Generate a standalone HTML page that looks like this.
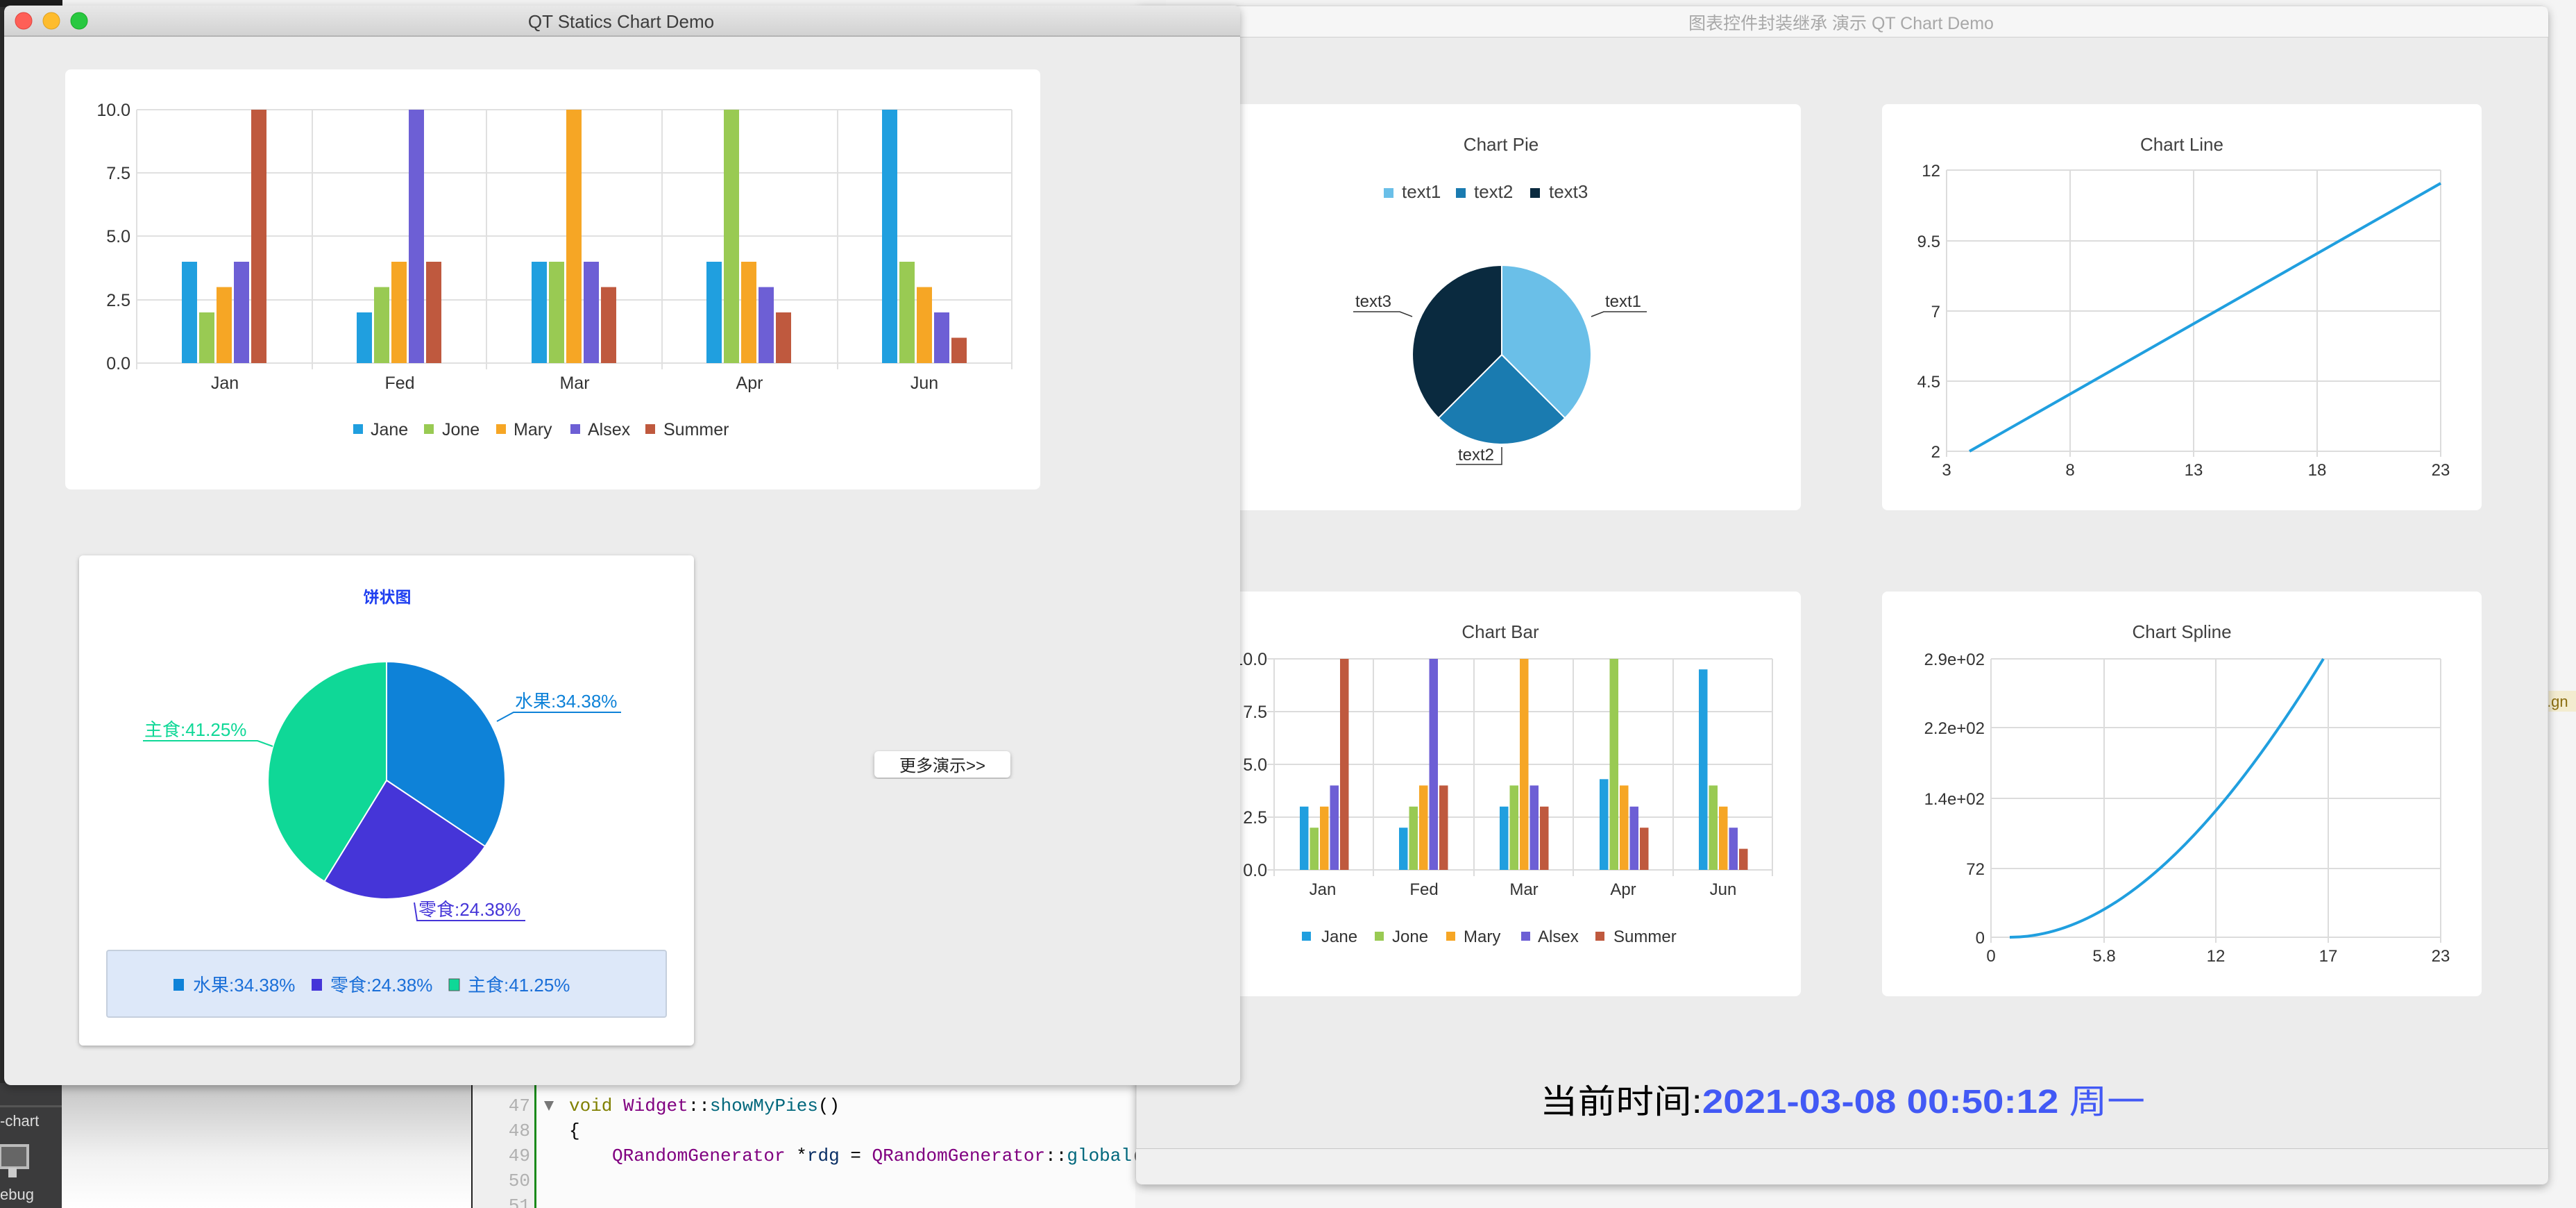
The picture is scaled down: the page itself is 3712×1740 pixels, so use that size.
<!DOCTYPE html>
<html><head><meta charset="utf-8"><style>
html,body{margin:0;padding:0;width:3712px;height:1740px;overflow:hidden;background:#f4f4f4}
svg{display:block}
text{font-family:"Liberation Sans","Noto Sans CJK SC",sans-serif}
.mono text{font-family:"Liberation Mono","Noto Sans CJK SC",monospace}
</style></head><body>
<svg width="3712" height="1740" viewBox="0 0 3712 1740" xmlns="http://www.w3.org/2000/svg">
<defs>
<linearGradient id="tb" x1="0" y1="0" x2="0" y2="1"><stop offset="0" stop-color="#e8e8e8"/><stop offset="1" stop-color="#d2d2d2"/></linearGradient>
<linearGradient id="ed" x1="0" y1="0" x2="0" y2="1"><stop offset="0" stop-color="#c4c4c4"/><stop offset="0.6" stop-color="#f2f2f2"/><stop offset="1" stop-color="#ffffff"/></linearGradient>
<filter id="sh" x="-5%" y="-5%" width="110%" height="115%"><feDropShadow dx="0" dy="4" stdDeviation="6" flood-color="#000" flood-opacity="0.3"/></filter>
<filter id="sh2" x="-5%" y="-5%" width="110%" height="110%"><feDropShadow dx="0" dy="2" stdDeviation="3" flood-color="#000" flood-opacity="0.3"/></filter>
</defs>
<rect x="0" y="0" width="3712" height="1740" fill="#f4f4f4"/>
<rect x="0" y="0" width="40" height="1740" fill="#2c2c2c"/>
<rect x="90" y="0" width="1590" height="10" fill="#f2f2f2"/>
<rect x="0" y="0" width="90" height="10" fill="#1c1c1c"/>
<rect x="0" y="1560" width="89" height="180" fill="#3b3b3c"/>
<rect x="0" y="1592" width="89" height="3" fill="#555"/>
<text x="0" y="1622" font-size="22" fill="#ddd">-chart</text>
<rect x="0" y="1650" width="40" height="32" fill="#666" stroke="#bbb" stroke-width="4"/>
<rect x="12" y="1682" width="12" height="14" fill="#ccc"/>
<text x="0" y="1728" font-size="22" fill="#ddd">ebug</text>
<rect x="89" y="1560" width="591" height="180" fill="url(#ed)"/>
<rect x="680" y="1560" width="92" height="180" fill="#efefef"/>
<rect x="679" y="1560" width="2" height="180" fill="#222"/>
<rect x="770" y="1560" width="3" height="180" fill="#1a8a1a"/>
<rect x="773" y="1560" width="863" height="180" fill="#fbfbfb"/>
<g class="mono" font-size="26" fill="#b0b0b0" text-anchor="end">
<text x="764" y="1600">47</text><text x="764" y="1636">48</text><text x="764" y="1672">49</text><text x="764" y="1708">50</text><text x="764" y="1744">51</text>
</g>
<path d="M784 1586 L798 1586 L791 1600 Z" fill="#777"/>
<g class="mono" font-size="26">
<text x="820" y="1600"><tspan fill="#808000">void</tspan> <tspan fill="#800080">Widget</tspan><tspan fill="#000">::</tspan><tspan fill="#00677c">showMyPies</tspan><tspan fill="#000">()</tspan></text>
<text x="820" y="1636" fill="#000">{</text>
<text x="882" y="1672"><tspan fill="#800080">QRandomGenerator</tspan> <tspan fill="#000">*</tspan><tspan fill="#092e64">rdg</tspan> <tspan fill="#000">=</tspan> <tspan fill="#800080">QRandomGenerator</tspan><tspan fill="#000">::</tspan><tspan fill="#00677c">global</tspan><tspan fill="#000">(</tspan></text>
</g>
<rect x="3672" y="995" width="40" height="30" fill="#f3ecd0"/>
<text x="3670" y="1018" font-size="22" fill="#8a6d10">.gn</text>

<g filter="url(#sh)">
<rect x="1637" y="9" width="2035" height="1697" rx="10" fill="#ececec" stroke="#c8c8c8" stroke-width="1"/>
</g>
<path d="M1637 53 V19 Q1637 9 1647 9 H3662 Q3672 9 3672 19 V53 Z" fill="#f6f6f6"/>
<rect x="1637" y="53" width="2035" height="1" fill="#d0d0d0"/>
<text x="2653" y="42" font-size="25" fill="#a8a8a8" text-anchor="middle">图表控件封装继承 演示 QT Chart Demo</text>
<rect x="1637" y="1654" width="2035" height="1" fill="#c8c8c8"/>
<path d="M1637 1655 H3672 V1696 Q3672 1706 3662 1706 H1647 Q1637 1706 1637 1696 Z" fill="#f0f0f0"/>

<rect x="1745" y="150" width="850" height="585" rx="8" fill="#fff"/>
<rect x="2712" y="150" width="864" height="585" rx="8" fill="#fff"/>
<rect x="1745" y="852" width="850" height="583" rx="8" fill="#fff"/>
<rect x="2712" y="852" width="864" height="583" rx="8" fill="#fff"/>

<g font-size="26" fill="#404040">
<text x="2163" y="217" text-anchor="middle">Chart Pie</text>
<rect x="1994" y="271" width="14" height="14" fill="#6abfe8"/><text x="2020" y="285">text1</text>
<rect x="2098" y="271" width="14" height="14" fill="#1a7bb0"/><text x="2124" y="285">text2</text>
<rect x="2205" y="271" width="14" height="14" fill="#0a2a3f"/><text x="2232" y="285">text3</text>
</g>
<g stroke="#fff" stroke-width="2">
<path d="M2164 511 L2164 382 A129 129 0 0 1 2255.2 602.2 Z" fill="#6abfe8"/>
<path d="M2164 511 L2255.2 602.2 A129 129 0 0 1 2072.8 602.2 Z" fill="#1a7bb0"/>
<path d="M2164 511 L2072.8 602.2 A129 129 0 0 1 2164 382 Z" fill="#0a2a3f"/>
</g>
<g font-size="24" fill="#333" stroke-width="1.5">
<text x="2313" y="442">text1</text><path d="M2293 456 L2311 449 H2373" stroke="#333" fill="none"/>
<text x="1953" y="442">text3</text><path d="M2035 456 L2017 449 H1950" stroke="#333" fill="none"/>
<text x="2101" y="663">text2</text><path d="M2164 644 V669 H2098" stroke="#333" fill="none"/>
</g>

<text x="3144" y="217" font-size="26" fill="#404040" text-anchor="middle">Chart Line</text>
<g stroke="#dcdcdc" stroke-width="2">
<path d="M2805 245 H3517 M2805 347 H3517 M2805 448 H3517 M2805 549 H3517 M2805 650 H3517"/>
<path d="M2805 245 V658 M2983 245 V658 M3161 245 V658 M3339 245 V658 M3517 245 V658"/>
</g>
<g font-size="24" fill="#333">
<g text-anchor="end"><text x="2796" y="254">12</text><text x="2796" y="356">9.5</text><text x="2796" y="457">7</text><text x="2796" y="558">4.5</text><text x="2796" y="659">2</text></g>
<g text-anchor="middle"><text x="2805" y="685">3</text><text x="2983" y="685">8</text><text x="3161" y="685">13</text><text x="3339" y="685">18</text><text x="3517" y="685">23</text></g>
</g>
<path d="M2838 650 L3517 264" stroke="#209fdf" stroke-width="4" fill="none"/>

<text x="2162" y="919" font-size="26" fill="#404040" text-anchor="middle">Chart Bar</text>
<g stroke="#dcdcdc" stroke-width="2">
<path d="M1826 949 H2554 M1826 1025 H2554 M1826 1101 H2554 M1826 1177 H2554 M1826 1253 H2554"/>
<path d="M1836 949 V1262 M1979 949 V1262 M2124 949 V1262 M2267 949 V1262 M2411 949 V1262 M2554 949 V1262"/>
</g>
<g font-size="25" fill="#333" text-anchor="end">
<text x="1826" y="958">10.0</text><text x="1826" y="1034">7.5</text><text x="1826" y="1110">5.0</text><text x="1826" y="1186">2.5</text><text x="1826" y="1262">0.0</text>
</g>
<g font-size="24" fill="#333" text-anchor="middle">
<text x="1906" y="1289">Jan</text><text x="2052" y="1289">Fed</text><text x="2196" y="1289">Mar</text><text x="2339" y="1289">Apr</text><text x="2483" y="1289">Jun</text>
</g>
<g>
<rect x="1873" y="1161.8" width="12.5" height="91.2" fill="#209fdf"/>
<rect x="1887.5" y="1192.2" width="12.5" height="60.8" fill="#99ca53"/>
<rect x="1902" y="1161.8" width="12.5" height="91.2" fill="#f6a625"/>
<rect x="1916.5" y="1131.4" width="12.5" height="121.6" fill="#6d5fd5"/>
<rect x="1931" y="949" width="12.5" height="304" fill="#bf593e"/>
<rect x="2016" y="1192.2" width="12.5" height="60.8" fill="#209fdf"/>
<rect x="2030.5" y="1161.8" width="12.5" height="91.2" fill="#99ca53"/>
<rect x="2045" y="1131.4" width="12.5" height="121.6" fill="#f6a625"/>
<rect x="2059.5" y="949" width="12.5" height="304" fill="#6d5fd5"/>
<rect x="2074" y="1131.4" width="12.5" height="121.6" fill="#bf593e"/>
<rect x="2161" y="1161.8" width="12.5" height="91.2" fill="#209fdf"/>
<rect x="2175.5" y="1131.4" width="12.5" height="121.6" fill="#99ca53"/>
<rect x="2190" y="949" width="12.5" height="304" fill="#f6a625"/>
<rect x="2204.5" y="1131.4" width="12.5" height="121.6" fill="#6d5fd5"/>
<rect x="2219" y="1161.8" width="12.5" height="91.2" fill="#bf593e"/>
<rect x="2305" y="1122.3" width="12.5" height="130.7" fill="#209fdf"/>
<rect x="2319.5" y="949" width="12.5" height="304" fill="#99ca53"/>
<rect x="2334" y="1131.4" width="12.5" height="121.6" fill="#f6a625"/>
<rect x="2348.5" y="1161.8" width="12.5" height="91.2" fill="#6d5fd5"/>
<rect x="2363" y="1192.2" width="12.5" height="60.8" fill="#bf593e"/>
<rect x="2448" y="964.2" width="12.5" height="288.8" fill="#209fdf"/>
<rect x="2462.5" y="1131.4" width="12.5" height="121.6" fill="#99ca53"/>
<rect x="2477" y="1161.8" width="12.5" height="91.2" fill="#f6a625"/>
<rect x="2491.5" y="1192.2" width="12.5" height="60.8" fill="#6d5fd5"/>
<rect x="2506" y="1222.6" width="12.5" height="30.4" fill="#bf593e"/>
</g>
<g font-size="24" fill="#333">
<rect x="1876" y="1342" width="13" height="13" fill="#209fdf"/><text x="1904" y="1357">Jane</text>
<rect x="1981" y="1342" width="13" height="13" fill="#99ca53"/><text x="2006" y="1357">Jone</text>
<rect x="2084" y="1342" width="13" height="13" fill="#f6a625"/><text x="2109" y="1357">Mary</text>
<rect x="2192" y="1342" width="13" height="13" fill="#6d5fd5"/><text x="2216" y="1357">Alsex</text>
<rect x="2299" y="1342" width="13" height="13" fill="#bf593e"/><text x="2325" y="1357">Summer</text>
</g>

<text x="3144" y="919" font-size="26" fill="#404040" text-anchor="middle">Chart Spline</text>
<g stroke="#dcdcdc" stroke-width="2">
<path d="M2869 949 H3517 M2869 1048 H3517 M2869 1150 H3517 M2869 1251 H3517 M2869 1350 H3517"/>
<path d="M2869 949 V1358 M3032 949 V1358 M3193 949 V1358 M3355 949 V1358 M3517 949 V1358"/>
</g>
<g font-size="24" fill="#333">
<g text-anchor="end"><text x="2860" y="958">2.9e+02</text><text x="2860" y="1057">2.2e+02</text><text x="2860" y="1159">1.4e+02</text><text x="2860" y="1260">72</text><text x="2860" y="1359">0</text></g>
<g text-anchor="middle"><text x="2869" y="1385">0</text><text x="3032" y="1385">5.8</text><text x="3193" y="1385">12</text><text x="3355" y="1385">17</text><text x="3517" y="1385">23</text></g>
</g>
<path d="M2896 1350 C3047 1350 3197 1196 3348 949" fill="none" stroke="#209fdf" stroke-width="4"/>

<text x="2219" y="1603" font-size="48" textLength="872" lengthAdjust="spacingAndGlyphs"><tspan fill="#000">当前时间:</tspan><tspan fill="#4259f5" font-weight="bold">2021-03-08 00:50:12 </tspan><tspan fill="#4259f5">周一</tspan></text>

<g filter="url(#sh)">
<rect x="6" y="8" width="1781" height="1555" rx="10" fill="#ececec"/>
</g>
<path d="M6 51 V18 Q6 8 16 8 H1777 Q1787 8 1787 18 V51 Z" fill="url(#tb)"/>
<rect x="6" y="51" width="1781" height="2" fill="#b4b4b4"/>
<circle cx="34" cy="30" r="12" fill="#fe5f57" stroke="#e0443e" stroke-width="1"/>
<circle cx="74" cy="30" r="12" fill="#febc2e" stroke="#dea123" stroke-width="1"/>
<circle cx="114" cy="30" r="12" fill="#28c840" stroke="#1aab29" stroke-width="1"/>
<text x="895" y="40" font-size="26" fill="#3c3c3c" text-anchor="middle">QT Statics Chart Demo</text>

<rect x="94" y="100" width="1405" height="605" rx="8" fill="#fff"/>
<g stroke="#e0e0e0" stroke-width="2">
<path d="M197 158 H1458 M197 249 H1458 M197 340 H1458 M197 432 H1458 M197 523 H1458"/>
<path d="M197 158 V532 M450 158 V532 M701 158 V532 M954 158 V532 M1207 158 V532 M1458 158 V532"/>
</g>
<g font-size="25" fill="#333">
<g text-anchor="end"><text x="188" y="167">10.0</text><text x="188" y="258">7.5</text><text x="188" y="349">5.0</text><text x="188" y="441">2.5</text><text x="188" y="532">0.0</text></g>
<g text-anchor="middle"><text x="324" y="560">Jan</text><text x="576" y="560">Fed</text><text x="828" y="560">Mar</text><text x="1080" y="560">Apr</text><text x="1332" y="560">Jun</text></g>
</g>
<g>
<rect x="262" y="377" width="22" height="146" fill="#209fdf"/>
<rect x="287" y="450" width="22" height="73" fill="#99ca53"/>
<rect x="312" y="413.5" width="22" height="109.5" fill="#f6a625"/>
<rect x="337" y="377" width="22" height="146" fill="#6d5fd5"/>
<rect x="362" y="158" width="22" height="365" fill="#bf593e"/>
<rect x="514" y="450" width="22" height="73" fill="#209fdf"/>
<rect x="539" y="413.5" width="22" height="109.5" fill="#99ca53"/>
<rect x="564" y="377" width="22" height="146" fill="#f6a625"/>
<rect x="589" y="158" width="22" height="365" fill="#6d5fd5"/>
<rect x="614" y="377" width="22" height="146" fill="#bf593e"/>
<rect x="766" y="377" width="22" height="146" fill="#209fdf"/>
<rect x="791" y="377" width="22" height="146" fill="#99ca53"/>
<rect x="816" y="158" width="22" height="365" fill="#f6a625"/>
<rect x="841" y="377" width="22" height="146" fill="#6d5fd5"/>
<rect x="866" y="413.5" width="22" height="109.5" fill="#bf593e"/>
<rect x="1018" y="377" width="22" height="146" fill="#209fdf"/>
<rect x="1043" y="158" width="22" height="365" fill="#99ca53"/>
<rect x="1068" y="377" width="22" height="146" fill="#f6a625"/>
<rect x="1093" y="413.5" width="22" height="109.5" fill="#6d5fd5"/>
<rect x="1118" y="450" width="22" height="73" fill="#bf593e"/>
<rect x="1271" y="158" width="22" height="365" fill="#209fdf"/>
<rect x="1296" y="377" width="22" height="146" fill="#99ca53"/>
<rect x="1321" y="413.5" width="22" height="109.5" fill="#f6a625"/>
<rect x="1346" y="450" width="22" height="73" fill="#6d5fd5"/>
<rect x="1371" y="486.5" width="22" height="36.5" fill="#bf593e"/>
</g>
<g font-size="25" fill="#333">
<rect x="509" y="611" width="14" height="14" fill="#209fdf"/><text x="534" y="627">Jane</text>
<rect x="611" y="611" width="14" height="14" fill="#99ca53"/><text x="637" y="627">Jone</text>
<rect x="715" y="611" width="14" height="14" fill="#f6a625"/><text x="740" y="627">Mary</text>
<rect x="822" y="611" width="14" height="14" fill="#6d5fd5"/><text x="847" y="627">Alsex</text>
<rect x="930" y="611" width="14" height="14" fill="#bf593e"/><text x="956" y="627">Summer</text>
</g>

<g filter="url(#sh2)"><rect x="114" y="800" width="886" height="706" rx="6" fill="#fff"/></g>
<text x="558" y="868" font-size="23" font-weight="bold" fill="#2040f0" text-anchor="middle">饼状图</text>
<g stroke="#fff" stroke-width="2">
<path d="M557 1124 L557 953 A171 171 0 0 1 699.1 1219.1 Z" fill="#0e82d8"/>
<path d="M557 1124 L699.1 1219.1 A171 171 0 0 1 467.4 1269.6 Z" fill="#4535d8"/>
<path d="M557 1124 L467.4 1269.6 A171 171 0 0 1 557 953 Z" fill="#0fd897"/>
</g>
<g font-size="26" stroke-width="2" fill="none">
<text x="742" y="1019" fill="#0e82d8" stroke="none">水果:34.38%</text>
<path d="M716 1039 L740 1026 H895" stroke="#0e82d8"/>
<text x="208" y="1060" fill="#0fd897" stroke="none">主食:41.25%</text>
<path d="M393 1075 L371 1067 H206" stroke="#0fd897"/>
<text x="603" y="1319" fill="#4535d8" stroke="none">零食:24.38%</text>
<path d="M597 1300 L601 1326 H757" stroke="#4535d8"/>
</g>
<rect x="154" y="1369" width="806" height="96" rx="3" fill="#dde8f9" stroke="#c5cfdd" stroke-width="2"/>
<g font-size="26" fill="#1a6fd8">
<rect x="250" y="1410" width="15" height="17" fill="#0e82d8"/><text x="278" y="1428">水果:34.38%</text>
<rect x="449" y="1410" width="15" height="17" fill="#4535d8"/><text x="476" y="1428">零食:24.38%</text>
<rect x="647" y="1410" width="15" height="17" fill="#0fd897" stroke="#555" stroke-width="1"/><text x="674" y="1428">主食:41.25%</text>
</g>

<g filter="url(#sh2)"><rect x="1260" y="1082" width="196" height="38" rx="6" fill="#fff"/></g>
<text x="1358" y="1111" font-size="24" fill="#222" text-anchor="middle">更多演示&gt;&gt;</text>
</svg>
</body></html>
